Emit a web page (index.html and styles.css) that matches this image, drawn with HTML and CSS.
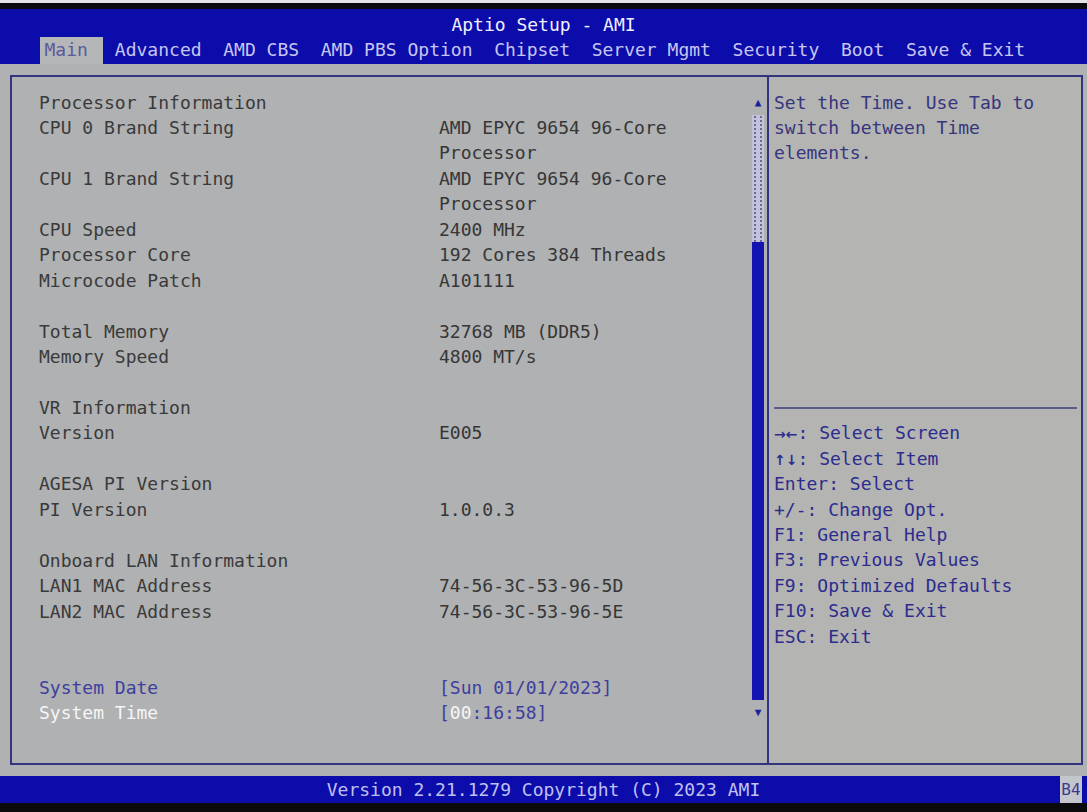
FILE: index.html
```html
<!DOCTYPE html>
<html>
<head>
  <title>Aptio Setup - AMI</title>
  <link rel="stylesheet" href="styles.css">
</head>
<body>
  <div class="bezel"></div>

  <!-- Title and menu tabs -->
  <header class="header">
    <div class="title">Aptio Setup - AMI</div>
    <nav class="tabs">
      <span class="tab active">Main</span>
      <span class="tab">Advanced</span>
      <span class="tab">AMD CBS</span>
      <span class="tab">AMD PBS Option</span>
      <span class="tab">Chipset</span>
      <span class="tab">Server Mgmt</span>
      <span class="tab">Security</span>
      <span class="tab">Boot</span>
      <span class="tab">Save &amp; Exit</span>
    </nav>
  </header>

  <main class="frame">
    <!-- Left panel - system information -->
    <section class="info">
      <div class="row"><span class="label">Processor Information</span></div>
      <div class="row"><span class="label">CPU 0 Brand String</span><span class="value">AMD EPYC 9654 96-Core Processor</span></div>
      <div class="row"><span class="label">CPU 1 Brand String</span><span class="value">AMD EPYC 9654 96-Core Processor</span></div>
      <div class="row"><span class="label">CPU Speed</span><span class="value">2400 MHz</span></div>
      <div class="row"><span class="label">Processor Core</span><span class="value">192 Cores 384 Threads</span></div>
      <div class="row"><span class="label">Microcode Patch</span><span class="value">A101111</span></div>
      <div class="row"></div>
      <div class="row"><span class="label">Total Memory</span><span class="value">32768 MB (DDR5)</span></div>
      <div class="row"><span class="label">Memory Speed</span><span class="value">4800 MT/s</span></div>
      <div class="row"></div>
      <div class="row"><span class="label">VR Information</span></div>
      <div class="row"><span class="label">Version</span><span class="value">E005</span></div>
      <div class="row"></div>
      <div class="row"><span class="label">AGESA PI Version</span></div>
      <div class="row"><span class="label">PI Version</span><span class="value">1.0.0.3</span></div>
      <div class="row"></div>
      <div class="row"><span class="label">Onboard LAN Information</span></div>
      <div class="row"><span class="label">LAN1 MAC Address</span><span class="value">74-56-3C-53-96-5D</span></div>
      <div class="row"><span class="label">LAN2 MAC Address</span><span class="value">74-56-3C-53-96-5E</span></div>
      <div class="row"></div>
      <div class="row"></div>
      <div class="row date"><span class="label">System Date</span><span class="value">[Sun 01/01/2023]</span></div>
      <div class="row time"><span class="label">System Time</span><span class="value">[<span class="sel">00</span>:16:58]</span></div>
    </section>

    <!-- Scroll bar -->
    <div class="scroll">
      <span class="arrow">&#9650;</span>
      <div class="track"></div>
      <div class="thumb"></div>
      <span class="arrow">&#9660;</span>
    </div>

    <!-- Right panel - help -->
    <aside class="help">
      <div class="help-text">Set the Time. Use Tab to switch between Time elements.</div>
      <div class="rule"></div>
      <div class="keys">
        <div><span class="glyph">&rarr;&larr;</span>: Select Screen</div>
        <div><span class="glyph">&uarr;&darr;</span>: Select Item</div>
        <div>Enter: Select</div>
        <div>+/-: Change Opt.</div>
        <div>F1: General Help</div>
        <div>F3: Previous Values</div>
        <div>F9: Optimized Defaults</div>
        <div>F10: Save &amp; Exit</div>
        <div>ESC: Exit</div>
      </div>
    </aside>
  </main>

  <footer class="footer">
    <span class="version">Version 2.21.1279 Copyright (C) 2023 AMI</span>
    <span class="code">B4</span>
  </footer>
  <div class="bezel bottom"></div>
</body>
</html>
```

FILE: styles.css
```css
body {
  margin: 0;
  height: 812px;
  overflow: hidden;
  background: #afb1b2;
  font-family: "DejaVu Sans Mono", "Liberation Mono", monospace;
  font-size: 18px;
  color: #3a3a3a;
}

.bezel {
  height: 9px;
  box-sizing: border-box;
  background: #0a0a0c;
  border-top: 3px solid #e4e4e8;
}

.bezel.bottom {
  border-top: none;
}

.header {
  height: 55px;
  background: #0c0caa;
  display: flex;
  flex-direction: column;
}

.title {
  padding-top: 3px;
  line-height: 25.45px;
  text-align: center;
  color: #f0f0ff;
}

.tabs {
  flex: 1;
  display: flex;
  padding-left: 40px;
  gap: 2ch;
  white-space: pre;
  color: #c6c6f0;
}

.tab {
  line-height: 26.5px;
}

.tab.active {
  background: #b4b6b8;
  color: #5a5a9e;
  padding: 0 15px 0 4.5px;
  margin-right: calc(12px - 2ch);
}

.frame {
  margin: 11px 4px 0 10px;
  height: 690px;
  box-sizing: border-box;
  border: 2px solid #34347e;
  display: flex;
}

.info {
  width: 740px;
  box-sizing: border-box;
  padding: 12.5px 0 0 27px;
}

.row {
  display: flex;
  min-height: 25.45px;
  line-height: 25.45px;
}

.label {
  flex: 0 0 400px;
  white-space: pre;
}

.value {
  width: 27ch;
  color: #363636;
}

.row.date .label,
.row.date .value,
.row.time .value {
  color: #3e3e9e;
}

.row.time .label,
.row.time .sel {
  color: #f6f6f6;
}

.scroll {
  width: 12px;
  margin-right: 3px;
  padding-top: 12.5px;
  display: flex;
  flex-direction: column;
}

.arrow {
  height: 25.45px;
  line-height: 25.45px;
  font-size: 11px;
  text-align: center;
  color: #1e1e9a;
}

.track {
  height: calc(25.45px * 5);
  background-color: #c2c2d8;
  background-image: radial-gradient(circle, #6a6a98 0.9px, transparent 1.4px);
  background-size: 6px 4px;
}

.thumb {
  height: calc(25.45px * 18);
  background: #1414b0;
}

.help {
  flex: 1;
  border-left: 2px solid #34347e;
  padding: 12.5px 4px 0 5px;
  background: #b4b4b2;
  line-height: 25.45px;
}

.help-text {
  height: calc(25.45px * 12);
  width: 26ch;
  color: #36367e;
}

.rule {
  margin: 11.7px 0;
  border-top: 2px solid #5c5c8c;
}

.keys div {
  height: 25.45px;
  color: #2c2c8e;
}

.glyph {
  font-family: "DejaVu Sans", sans-serif;
  font-weight: bold;
  font-size: 14px;
  line-height: 0;
}

.footer {
  margin-top: 11px;
  height: 27px;
  background: #0c0caa;
  display: flex;
  line-height: 27px;
  color: #c0c0f0;
}

.version {
  flex: 1;
  padding-left: 27px;
  text-align: center;
}

.code {
  width: 22px;
  margin-right: 5px;
  background: #c4c6ce;
  color: #3a3a8a;
  font-size: 16px;
  text-align: center;
}
```
